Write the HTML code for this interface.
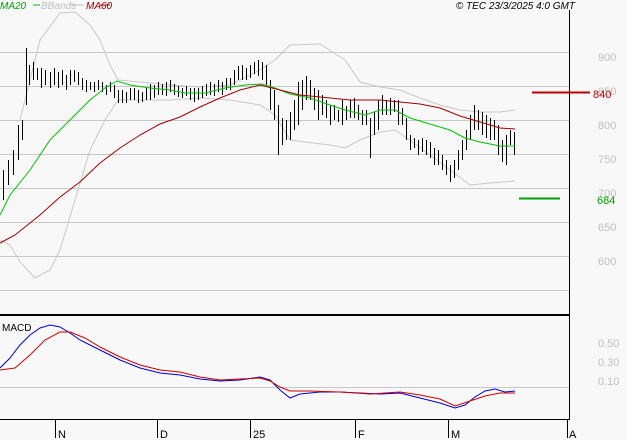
<!DOCTYPE html><html><head><style>body{margin:0;background:#f8f8f8}svg{display:block;font-family:"Liberation Sans",sans-serif}</style></head><body>
<svg width="627" height="440" viewBox="0 0 627 440">
<rect width="627" height="440" fill="#f8f8f8"/>
<g stroke="#c8c8c8" stroke-width="1">
<line x1="0" y1="52.5" x2="569" y2="52.5"/><line x1="0" y1="86.5" x2="569" y2="86.5"/><line x1="0" y1="120.5" x2="569" y2="120.5"/><line x1="0" y1="154.5" x2="569" y2="154.5"/><line x1="0" y1="188.5" x2="569" y2="188.5"/><line x1="0" y1="222.5" x2="569" y2="222.5"/><line x1="0" y1="256.5" x2="569" y2="256.5"/><line x1="0" y1="290.5" x2="569" y2="290.5"/><line x1="0" y1="387.5" x2="569" y2="387.5"/>
</g>
<g fill="#c0c0c0" font-size="11"><text x="598" y="61">900</text><text x="598" y="95">850</text><text x="598" y="129">800</text><text x="598" y="163">750</text><text x="598" y="197">700</text><text x="598" y="231">650</text><text x="598" y="265">600</text><text x="598" y="347">0.50</text><text x="598" y="366">0.30</text><text x="598" y="385">0.10</text></g>
<polyline fill="none" stroke="#c8c8c8" points="20,120 40,40 60,13 75,12 90,25 100,40 110,65 118,80 140,82 170,85 200,87 230,85 260,70 275,60 290,45 320,44 345,60 360,82 380,87 400,90 420,98 440,105 460,110 480,112 500,112 515,110"/>
<polyline fill="none" stroke="#c8c8c8" points="0,240 10,245 20,262 35,278 50,270 60,250 75,200 90,150 105,120 118,100 140,100 170,100 200,98 230,100 260,105 275,115 290,140 305,142 330,145 345,148 360,140 380,132 395,130 410,140 430,155 450,170 470,185 490,183 515,181"/>
<g transform="translate(0.5,0)"><path stroke="#000" stroke-width="1" shape-rendering="crispEdges" fill="none" d="M3 170V200M8 160V185M13 150V175M18 125V160M22 120V140M26 48V105M29 65V85M33 62V80M37 68V80M41 68V88M45 70V85M50 72V88M54 68V85M58 72V88M62 70V85M66 75V90M70 70V85M74 70V82M78 72V85M82 78V90M86 80V92M90 82V90M94 82V92M98 80V90M102 82V92M106 85V95M110 82V92M114 85V98M118 90V103M122 90V103M126 92V103M130 88V100M134 88V100M138 90V103M142 92V102M146 88V100M150 84V100M154 85V98M158 82V95M162 84V95M166 82V96M170 80V92M174 84V95M178 86V97M182 88V98M186 86V96M190 88V100M194 88V102M198 88V100M202 86V98M206 84V96M210 82V95M214 84V96M218 80V92M222 82V95M226 78V90M230 78V90M234 70V85M238 66V80M242 65V80M246 68V80M250 65V78M254 62V74M258 60V76M262 62V80M266 65V85M270 80V110M274 90V120M278 105V155M282 118V145M286 120V140M290 112V140M294 100V130M298 82V125M302 80V110M306 76V100M310 80V100M314 88V110M318 90V120M322 95V115M326 100V118M330 105V125M334 105V120M338 110V122M342 100V125M346 106V120M350 100V118M354 98V118M358 105V120M362 110V125M366 110V125M370 118V158M374 112V135M378 100V130M382 95V115M386 100V115M390 98V115M394 100V112M398 100V125M402 108V125M406 118V140M410 135V150M414 138V148M418 140V155M422 138V152M426 140V155M430 142V158M434 148V165M438 150V165M442 155V170M446 160V175M450 165V182M454 160V178M458 150V170M462 140V160M466 130V150M470 115V140M474 105V130M478 110V130M482 112V135M486 115V138M490 118V140M494 120V140M498 125V155M502 140V162M506 135V165M510 130V145M514 132V155"/></g>
<polyline fill="none" stroke="#00c000" points="0,215 10,195 30,170 50,140 70,120 90,100 105,88 117,81 130,85 150,88 170,90 185,93 205,93 225,88 245,85 262,84 275,88 290,94 310,98 330,105 345,110 365,115 380,110 395,110 410,118 430,124 450,130 465,138 480,142 500,146 515,146"/>
<polyline fill="none" stroke="#a00000" points="0,243 15,235 40,215 60,197 80,182 100,163 120,148 140,135 160,124 180,117 200,107 220,98 240,90 260,85 280,90 300,95 320,97 350,100 380,100 400,102 420,104 440,108 460,116 480,122 500,128 515,129"/>
<line x1="532" y1="92.5" x2="590" y2="92.5" stroke="#c00000" stroke-width="2"/>
<text x="593" y="98" fill="#c00000" font-size="11">840</text>
<line x1="519" y1="198.5" x2="560" y2="198.5" stroke="#00a000" stroke-width="2"/>
<text x="597" y="204" fill="#00a000" font-size="11">684</text>
<polyline fill="none" stroke="#0000d0" points="0,368 10,358 20,345 30,335 40,328 50,325 60,327 70,333 80,340 90,345 100,350 110,355 120,360 140,368 160,373 180,375 200,379 220,381 240,380 260,377 270,380 280,390 290,398 300,394 320,392 340,392 360,393 380,394 400,393 420,398 440,403 455,408 465,405 475,397 485,391 495,389 505,392 515,391"/>
<polyline fill="none" stroke="#d00000" points="0,370 15,368 30,355 45,340 60,332 70,332 85,338 100,347 120,357 140,365 160,370 180,372 200,377 220,380 240,379 260,378 270,381 280,387 290,391 310,391 340,392 370,394 400,392 420,395 440,399 455,406 470,401 485,396 500,393 515,393"/>
<line x1="569.5" y1="10" x2="569.5" y2="419" stroke="#000"/>
<line x1="0" y1="315" x2="569" y2="315" stroke="#000" stroke-width="2"/>
<line x1="0" y1="419.5" x2="570" y2="419.5" stroke="#000"/>
<g stroke="#000"><line x1="55.5" y1="419" x2="55.5" y2="438"/><line x1="157.5" y1="419" x2="157.5" y2="438"/><line x1="250.5" y1="419" x2="250.5" y2="438"/><line x1="355.5" y1="419" x2="355.5" y2="438"/><line x1="448.5" y1="419" x2="448.5" y2="438"/><line x1="567.5" y1="419" x2="567.5" y2="438"/></g>
<g font-size="11" fill="#000"><text x="58" y="438">N</text><text x="160" y="438">D</text><text x="253" y="438">25</text><text x="358" y="438">F</text><text x="451" y="438">M</text><text x="569" y="438">A</text></g>
<text x="2" y="331" font-size="10" fill="#000">MACD</text>
<g font-size="10" font-style="italic"><text x="0" y="9" fill="#00a000">MA20</text><line x1="33" y1="5" x2="40" y2="5" stroke="#00c000"/><text x="41" y="9" fill="#c0c0c0">BBands</text><line x1="70" y1="5" x2="84" y2="5" stroke="#c0c0c0"/><text x="86" y="9" fill="#a00000">MA60</text><line x1="110" y1="5" x2="100" y2="5" stroke="#a00000"/></g>
<text x="575" y="9" font-size="10" font-style="italic" text-anchor="end" fill="#000">© TEC 23/3/2025 4:0 GMT</text>
</svg>
</body></html>
